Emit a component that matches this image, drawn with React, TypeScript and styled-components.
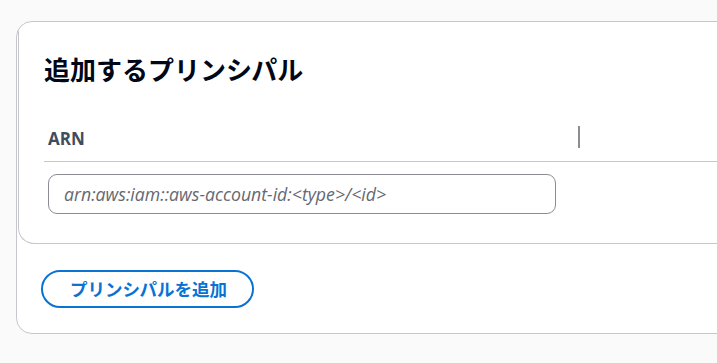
import React from 'react';
import styled, { createGlobalStyle } from 'styled-components';

const GlobalStyle = createGlobalStyle`
  html, body {
    margin: 0;
    padding: 0;
    background: #fafafa;
    overflow: hidden;
  }
  body {
    font-family: "Open Sans", "Noto Sans CJK JP", sans-serif;
    color: #000716;
  }
`;

const Page = styled.div`
  padding: 21px 0 0 16px;
  width: 780px;
`;

const Card = styled.section`
  background: #ffffff;
  border: 1px solid #c6c6cd;
  border-radius: 16px;
  overflow: hidden;
`;

const TableSection = styled.div`
  margin-left: 1px;
  border-left: 1px solid #c6c6cd;
  border-bottom: 1px solid #c6c6cd;
  border-bottom-left-radius: 16px;
  padding: 0 0 29px 25px;
`;

const Title = styled.h2`
  margin: 0;
  padding: 31px 0 30px 0;
  font-family: "Noto Sans CJK JP", sans-serif;
  font-size: 26px;
  font-weight: 700;
  line-height: 32px;
  color: #000716;
`;

const HeaderRow = styled.div`
  display: flex;
  align-items: center;
  height: 46px;
  border-bottom: 1px solid #c6c6cd;
`;

const HeaderCell = styled.div<{ width: number }>`
  position: relative;
  width: ${(p) => p.width}px;
  padding-left: 4px;
  font-size: 17px;
  font-weight: 700;
  color: #414d5c;
  display: flex;
  align-items: center;
  height: 100%;
`;

const Resizer = styled.span`
  position: absolute;
  right: 0;
  top: 11px;
  width: 2px;
  height: 22px;
  background: #8c8c94;
`;

const BodyRow = styled.div`
  padding: 12px 0 0 4px;
`;

const Input = styled.input`
  box-sizing: border-box;
  width: 508px;
  height: 40px;
  border: 1px solid #8c8c94;
  border-radius: 9px;
  padding: 0 15px;
  font-family: "Open Sans", sans-serif;
  font-size: 17.7px;
  background: #ffffff;
  outline: none;
  &::placeholder {
    color: #656871;
    font-style: italic;
  }
`;

const Footer = styled.div`
  padding: 26px 0 25px 24px;
`;

const AddButton = styled.button`
  box-sizing: border-box;
  height: 38px;
  padding: 0 25px 0 27px;
  border: 2px solid #0972d3;
  border-radius: 20px;
  background: #ffffff;
  color: #0972d3;
  font-family: "Noto Sans CJK JP", sans-serif;
  font-size: 17.5px;
  font-weight: 700;
  line-height: 20px;
  cursor: pointer;
`;

export default function App() {
  return (
    <>
      <GlobalStyle />
      <Page>
        <Card>
          <TableSection>
            <Title>追加するプリンシパル</Title>
            <HeaderRow>
              <HeaderCell width={532}>
                ARN
                <Resizer />
              </HeaderCell>
            </HeaderRow>
            <BodyRow>
              <Input placeholder="arn:aws:iam::aws-account-id:<type>/<id>" />
            </BodyRow>
          </TableSection>
          <Footer>
            <AddButton>プリンシパルを追加</AddButton>
          </Footer>
        </Card>
      </Page>
    </>
  );
}
